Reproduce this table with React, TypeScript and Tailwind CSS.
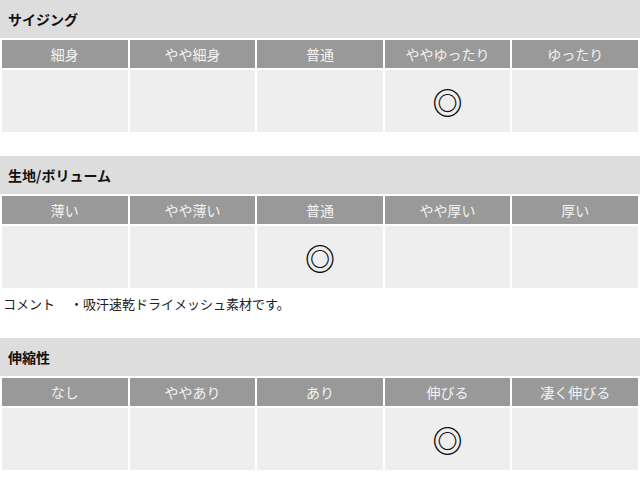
const font = { fontFamily: '"Noto Sans CJK JP", "Noto Sans", sans-serif' };

type Section = {
  title: string;
  cols: string[];
  mark: number;
  comment?: string;
};

const sections: Section[] = [
  { title: "サイジング", cols: ["細身", "やや細身", "普通", "ややゆったり", "ゆったり"], mark: 3 },
  {
    title: "生地/ボリューム",
    cols: ["薄い", "やや薄い", "普通", "やや厚い", "厚い"],
    mark: 2,
    comment: "・吸汗速乾ドライメッシュ素材です。",
  },
  { title: "伸縮性", cols: ["なし", "ややあり", "あり", "伸びる", "凄く伸びる"], mark: 3 },
];

function SpecTable({ section }: { section: Section }) {
  return (
    <div>
      <div className="flex h-[38px] items-center bg-[#dddddd] pl-2 text-[14px] font-bold text-[#111]">
        {section.title}
      </div>
      <table className="w-full table-fixed border-separate border-spacing-[2px]">
        <thead>
          <tr>
            {section.cols.map((c) => (
              <th
                key={c}
                className="h-[28px] bg-[#999999] p-0 text-center text-[14px] font-normal text-[#f2f2f2]"
              >
                {c}
              </th>
            ))}
          </tr>
        </thead>
        <tbody>
          <tr>
            {section.cols.map((c, i) => (
              <td
                key={c}
                className="h-[62px] bg-[#eeeeee] p-0 text-center text-[30px] font-bold leading-none text-[#111]"
              >
                {i === section.mark ? "◎" : ""}
              </td>
            ))}
          </tr>
        </tbody>
      </table>
      {section.comment && (
        <div className="flex pl-[3px] pt-[4px] text-[13px] leading-[20px] text-[#222]">
          <span className="w-[67px]">コメント</span>
          <span>{section.comment}</span>
        </div>
      )}
    </div>
  );
}

export default function App() {
  return (
    <div className="h-[492px] w-[640px] overflow-hidden bg-white" style={font}>
      <div className="flex flex-col">
        <SpecTable section={sections[0]} />
        <div className="mt-[22px]">
          <SpecTable section={sections[1]} />
        </div>
        <div className="mt-[24px]">
          <SpecTable section={sections[2]} />
        </div>
      </div>
    </div>
  );
}
